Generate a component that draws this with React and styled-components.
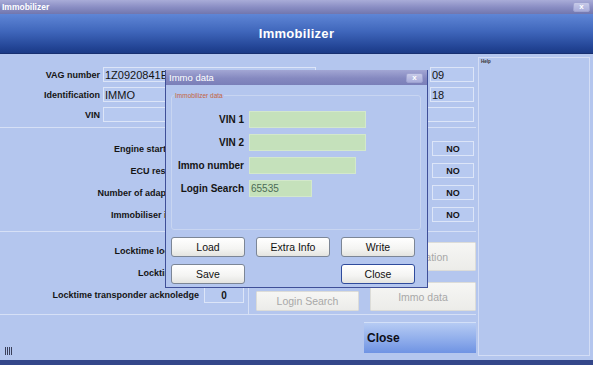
import React from "react";
import styled, { createGlobalStyle } from "styled-components";

const GlobalStyle = createGlobalStyle`
  html, body { margin: 0; padding: 0; background: #b4c6ee; }
  body { font-family: "Liberation Sans", Arial, sans-serif; }
  * { box-sizing: border-box; }
`;

const Root = styled.div`
  position: relative;
  width: 593px;
  height: 365px;
  overflow: hidden;
  display: flex;
  flex-direction: column;
  background: #b4c6ee;
  color: #141414;
`;

const TitleBar = styled.div`
  height: 14px;
  flex: none;
  display: flex;
  align-items: center;
  justify-content: space-between;
  padding: 0 3px 0 2px;
  background: linear-gradient(#a9acd8, #8a8ec4 50%, #7176ae);
  color: #fff;
  font-size: 8.5px;
  font-weight: bold;
`;

const TitleClose = styled.div`
  width: 17px;
  height: 10px;
  border-radius: 2px;
  background: linear-gradient(#c7cae8, #a9addb);
  border: 1px solid #9ea2d0;
  color: #fff;
  font-size: 8px;
  line-height: 7px;
  text-align: center;
  font-weight: bold;
`;

const Header = styled.div`
  height: 40px;
  flex: none;
  display: flex;
  align-items: center;
  justify-content: center;
  background: linear-gradient(#5f86d6, #3f66bb 45%, #234596 85%, #1b3a86);
  border-bottom: 1px solid #172f70;
  color: #fff;
  font-size: 13px;
  font-weight: bold;
  letter-spacing: 0.3px;
`;

const Body = styled.div`
  flex: 1;
  display: flex;
  border-bottom: 5px solid #34478a;
`;

const Main = styled.div`
  width: 476px;
  flex: none;
  display: flex;
  flex-direction: column;
`;

const Section = styled.div`
  height: ${(p) => p.$h}px;
  flex: none;
  padding-top: ${(p) => p.$pt || 0}px;
  display: flex;
  flex-direction: column;
  gap: ${(p) => p.$gap || 0}px;
  border-bottom: ${(p) => (p.$line ? "1px solid #d6e0f6" : "none")};
`;

const Row = styled.div`
  display: flex;
  align-items: center;
  height: ${(p) => p.$h || 15}px;
`;

const Label = styled.div`
  width: ${(p) => p.$w}px;
  flex: none;
  text-align: right;
  padding-right: ${(p) => p.$pr || 3}px;
  font-size: 9px;
  font-weight: bold;
  white-space: nowrap;
  overflow: hidden;
`;

const Box = styled.div`
  width: ${(p) => p.$w}px;
  height: ${(p) => p.$h || 15}px;
  flex: none;
  margin-left: ${(p) => p.$ml || 0}px;
  border: 1px solid #dce5f8;
  background: #b7c9f0;
  display: flex;
  align-items: center;
  justify-content: ${(p) => (p.$center ? "center" : "flex-start")};
  padding-left: ${(p) => (p.$center ? 0 : 1)}px;
  font-size: ${(p) => p.$fs || 11}px;
  font-weight: ${(p) => (p.$bold ? "bold" : "normal")};
  color: #141414;
  white-space: nowrap;
  overflow: hidden;
`;

const Split = styled.div`
  display: flex;
  height: 100%;
`;

const LockGroup = styled.div`
  width: 249px;
  flex: none;
  border-right: 1px solid #d6e0f6;
  padding-top: 11px;
  display: flex;
  flex-direction: column;
  gap: 6px;
`;

const ButtonArea = styled.div`
  display: flex;
  align-items: flex-start;
  padding-top: 10px;
`;

const ButtonCol = styled.div`
  display: flex;
  flex-direction: column;
  justify-content: flex-end;
  gap: 11px;
  margin-left: ${(p) => p.$ml}px;
  width: ${(p) => p.$w}px;
  height: 69px;
`;

const GreyButton = styled.div`
  height: ${(p) => p.$h}px;
  background: linear-gradient(#f6f6f4, #ecece9);
  border: 1px solid #dcdcd8;
  border-radius: 1px;
  color: #a8a8a8;
  font-size: 10.5px;
  display: flex;
  align-items: center;
  justify-content: center;
  overflow: hidden;
  white-space: nowrap;
`;

const Bottom = styled.div`
  flex: 1;
  display: flex;
  justify-content: space-between;
  align-items: flex-start;
  padding: 7px 0 0 5px;
`;

const Grip = styled.svg`
  margin-top: 25px;
`;

const BigClose = styled.div`
  width: 112px;
  height: 31px;
  background: linear-gradient(#b6cbf3, #93b0ec 50%, #6f93e3);
  border-top: 1px solid #d3e0f8;
  display: flex;
  align-items: center;
  padding-left: 3px;
  font-size: 12px;
  font-weight: bold;
  color: #0e0e18;
`;

const Help = styled.div`
  width: 112px;
  margin: 3px 0 4px 2px;
  border: 1px solid #d3ddf5;
  padding: 1px 2px;
  font-size: 4.5px;
  font-weight: bold;
  color: #333;
`;

/* ---------- dialog ---------- */

const Dialog = styled.div`
  position: absolute;
  left: 165px;
  top: 70px;
  width: 263px;
  height: 218px;
  background: #b4c6ee;
  border: 1px solid #3f4f98;
  border-top: none;
  display: flex;
  flex-direction: column;
`;

const DialogTitle = styled.div`
  height: 15px;
  flex: none;
  display: flex;
  align-items: center;
  justify-content: space-between;
  padding: 0 4px 0 3px;
  background: linear-gradient(#a2a6d4, #8589c0 55%, #7a7fb8);
  color: #fff;
  font-size: 9.5px;
`;

const DialogBody = styled.div`
  padding: 7px 6px 0 5px;
  display: flex;
  flex-direction: column;
`;

const Group = styled.fieldset`
  margin: 0;
  height: 138px;
  border: 1px solid #c8d5f1;
  border-radius: 3px;
  padding: 12px 0 0 0;
  display: flex;
  flex-direction: column;
  gap: 6px;
`;

const Legend = styled.legend`
  font-size: 6.5px;
  color: #c4643e;
  padding: 0 1px;
  margin-left: 2px;
`;

const FieldRow = styled.div`
  display: flex;
  align-items: center;
  height: 17px;
`;

const FieldLabel = styled.div`
  width: 72px;
  text-align: right;
  font-size: 10px;
  font-weight: bold;
  white-space: nowrap;
  margin-right: 5px;
`;

const GreenInput = styled.div`
  width: ${(p) => p.$w}px;
  height: 17px;
  background: #c5e1bb;
  border: 1px solid #d3e8cb;
  font-size: 10px;
  color: #4b6b56;
  display: flex;
  align-items: center;
  padding-left: 1px;
`;

const ButtonGrid = styled.div`
  margin-top: 7px;
  display: grid;
  grid-template-columns: repeat(3, 74px);
  justify-content: space-between;
  row-gap: 7px;
  padding-right: 6px;
`;

const DlgButton = styled.div`
  height: 20px;
  grid-column: ${(p) => p.$col};
  background: linear-gradient(#ffffff, #f4f4f2 60%, #e4e4e0);
  border: 1px solid ${(p) => (p.$default ? "#2f4b9c" : "#7c8696")};
  border-radius: 3px;
  font-size: 10.5px;
  color: #111;
  display: flex;
  align-items: center;
  justify-content: center;
`;

export default function App() {
  return (
    <>
      <GlobalStyle />
      <Root>
        <TitleBar>
          <span>Immobilizer</span>
          <TitleClose>x</TitleClose>
        </TitleBar>
        <Header>Immobilizer</Header>
        <Body>
          <Main>
            <Section $h={74} $pt={13} $gap={5} $line>
              <Row>
                <Label $w={103}>VAG number</Label>
                <Box $w={213}>1Z0920841E</Box>
                <Box $w={44} $ml={114}>09</Box>
              </Row>
              <Row>
                <Label $w={103}>Identification</Label>
                <Box $w={213}>IMMO</Box>
                <Box $w={44} $ml={114}>18</Box>
              </Row>
              <Row>
                <Label $w={103}>VIN</Label>
                <Box $w={371}></Box>
              </Row>
            </Section>
            <Section $h={104} $pt={13} $gap={7} $line>
              <Row>
                <Label $w={216}>Engine start possibility</Label>
                <Box $w={42} $ml={216} $center $bold $fs={9}>NO</Box>
              </Row>
              <Row>
                <Label $w={216}>ECU response time</Label>
                <Box $w={42} $ml={216} $center $bold $fs={9}>NO</Box>
              </Row>
              <Row>
                <Label $w={216}>Number of adaptation keys</Label>
                <Box $w={42} $ml={216} $center $bold $fs={9}>NO</Box>
              </Row>
              <Row>
                <Label $w={216}>Immobiliser is activated</Label>
                <Box $w={42} $ml={216} $center $bold $fs={9}>NO</Box>
              </Row>
            </Section>
            <Section $h={83} $line>
              <Split>
                <LockGroup>
                  <Row $h={16}>
                    <Label $w={204} $pr={5}>Locktime logins left</Label>
                    <Box $w={40} $h={16} $center $fs={10}></Box>
                  </Row>
                  <Row $h={16}>
                    <Label $w={204} $pr={5}>Locktime fault</Label>
                    <Box $w={40} $h={16} $center $fs={10}></Box>
                  </Row>
                  <Row $h={16}>
                    <Label $w={204} $pr={5}>Locktime transponder acknoledge</Label>
                    <Box $w={40} $h={16} $center $bold $fs={10}>0</Box>
                  </Row>
                </LockGroup>
                <ButtonArea>
                  <ButtonCol $ml={7} $w={103}>
                    <GreyButton $h={20}>Login Search</GreyButton>
                  </ButtonCol>
                  <ButtonCol $ml={11} $w={106}>
                    <GreyButton $h={29}>Adaptation</GreyButton>
                    <GreyButton $h={29}>Immo data</GreyButton>
                  </ButtonCol>
                </ButtonArea>
              </Split>
            </Section>
            <Bottom>
              <Grip width="7" height="8" viewBox="0 0 7 8">
                <g fill="#3a3f5a">
                  <rect x="0" y="0" width="1" height="8" />
                  <rect x="2" y="0" width="1" height="8" />
                  <rect x="4" y="0" width="1" height="8" />
                  <rect x="6" y="0" width="1" height="8" />
                </g>
              </Grip>
              <BigClose>Close</BigClose>
            </Bottom>
          </Main>
          <Help>Help</Help>
        </Body>

        <Dialog>
          <DialogTitle>
            <span>Immo data</span>
            <TitleClose>x</TitleClose>
          </DialogTitle>
          <DialogBody>
            <Group>
              <Legend>Immobilizer data</Legend>
              <FieldRow>
                <FieldLabel>VIN 1</FieldLabel>
                <GreenInput $w={117} />
              </FieldRow>
              <FieldRow>
                <FieldLabel>VIN 2</FieldLabel>
                <GreenInput $w={117} />
              </FieldRow>
              <FieldRow>
                <FieldLabel>Immo number</FieldLabel>
                <GreenInput $w={107} />
              </FieldRow>
              <FieldRow>
                <FieldLabel>Login Search</FieldLabel>
                <GreenInput $w={63}>65535</GreenInput>
              </FieldRow>
            </Group>
            <ButtonGrid>
              <DlgButton $col={1}>Load</DlgButton>
              <DlgButton $col={2}>Extra Info</DlgButton>
              <DlgButton $col={3}>Write</DlgButton>
              <DlgButton $col={1}>Save</DlgButton>
              <DlgButton $col={3} $default>Close</DlgButton>
            </ButtonGrid>
          </DialogBody>
        </Dialog>
      </Root>
    </>
  );
}
